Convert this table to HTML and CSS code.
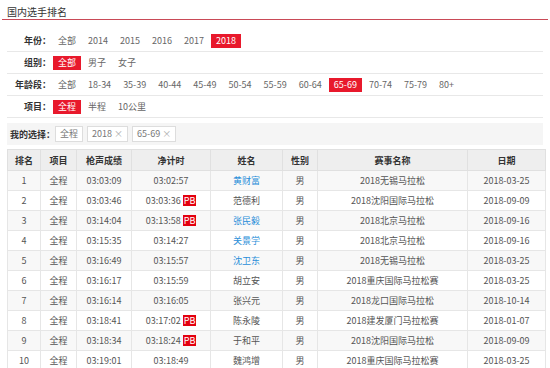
FILE: index.html
```html
<!DOCTYPE html>
<html lang="zh-CN">
<head>
  <meta charset="UTF-8" />
  <meta name="viewport" content="width=device-width, initial-scale=1.0"/>
  <title>国内选手排名</title>
  <link rel="stylesheet" href="styles.css">
</head>
<body>
  <h2 class="title">国内选手排名</h2>

  <div class="filters">
    <div class="filter-row">
      <span class="filter-label">年份：</span>
      <span class="opt">全部</span><span class="opt">2014</span><span class="opt">2015</span><span class="opt">2016</span><span class="opt">2017</span><span class="opt on">2018</span>
    </div>
    <div class="filter-row">
      <span class="filter-label">组别：</span>
      <span class="opt on">全部</span><span class="opt">男子</span><span class="opt">女子</span>
    </div>
    <div class="filter-row">
      <span class="filter-label">年龄段：</span>
      <span class="opt">全部</span><span class="opt">18-34</span><span class="opt">35-39</span><span class="opt">40-44</span><span class="opt">45-49</span><span class="opt">50-54</span><span class="opt">55-59</span><span class="opt">60-64</span><span class="opt on">65-69</span><span class="opt">70-74</span><span class="opt">75-79</span><span class="opt">80+</span>
    </div>
    <div class="filter-row">
      <span class="filter-label">项目：</span>
      <span class="opt on">全程</span><span class="opt">半程</span><span class="opt">10公里</span>
    </div>
  </div>

  <div class="picked">
    <span class="picked-label">我的选择：</span>
    <span class="chip">全程</span>
    <span class="chip">2018 <i>×</i></span>
    <span class="chip">65-69 <i>×</i></span>
  </div>

  <table class="rank">
    <colgroup>
      <col style="width:33px"><col style="width:36px"><col style="width:55px"><col style="width:79px">
      <col style="width:72px"><col style="width:35px"><col style="width:150px"><col style="width:78px">
    </colgroup>
    <thead>
      <tr><th>排名</th><th>项目</th><th>枪声成绩</th><th>净计时</th><th>姓名</th><th>性别</th><th>赛事名称</th><th>日期</th></tr>
    </thead>
    <tbody>
      <tr><td>1</td><td>全程</td><td>03:03:09</td><td>03:02:57</td><td><a class="name">黄财富</a></td><td>男</td><td>2018无锡马拉松</td><td>2018-03-25</td></tr>
      <tr><td>2</td><td>全程</td><td>03:03:46</td><td>03:03:36 <b class="pb">PB</b></td><td>范德利</td><td>男</td><td>2018沈阳国际马拉松</td><td>2018-09-09</td></tr>
      <tr><td>3</td><td>全程</td><td>03:14:04</td><td>03:13:58 <b class="pb">PB</b></td><td><a class="name">张民毅</a></td><td>男</td><td>2018北京马拉松</td><td>2018-09-16</td></tr>
      <tr><td>4</td><td>全程</td><td>03:15:35</td><td>03:14:27</td><td><a class="name">关景学</a></td><td>男</td><td>2018北京马拉松</td><td>2018-09-16</td></tr>
      <tr><td>5</td><td>全程</td><td>03:16:49</td><td>03:15:57</td><td><a class="name">沈卫东</a></td><td>男</td><td>2018无锡马拉松</td><td>2018-03-25</td></tr>
      <tr><td>6</td><td>全程</td><td>03:16:17</td><td>03:15:59</td><td>胡立安</td><td>男</td><td>2018重庆国际马拉松赛</td><td>2018-03-25</td></tr>
      <tr><td>7</td><td>全程</td><td>03:16:14</td><td>03:16:05</td><td>张兴元</td><td>男</td><td>2018龙口国际马拉松</td><td>2018-10-14</td></tr>
      <tr><td>8</td><td>全程</td><td>03:18:41</td><td>03:17:02 <b class="pb">PB</b></td><td>陈永陵</td><td>男</td><td>2018建发厦门马拉松赛</td><td>2018-01-07</td></tr>
      <tr><td>9</td><td>全程</td><td>03:18:34</td><td>03:18:24 <b class="pb">PB</b></td><td>于和平</td><td>男</td><td>2018沈阳国际马拉松</td><td>2018-09-09</td></tr>
      <tr><td>10</td><td>全程</td><td>03:19:01</td><td>03:18:49</td><td>魏鸿增</td><td>男</td><td>2018重庆国际马拉松赛</td><td>2018-03-25</td></tr>
    </tbody>
  </table>
</body>
</html>
```

FILE: styles.css
```css
* {
  margin: 0;
  padding: 0;
  box-sizing: border-box;
}

body {
  width: 550px;
  overflow: hidden;
  font-family: "Noto Sans CJK SC", "Noto Sans", sans-serif;
  font-size: 9px;
  color: #666;
  background: #fff;
}

.title {
  margin: 0 2px;
  padding: 4px 5px 0;
  height: 20px;
  font-size: 10px;
  line-height: 15px;
  font-weight: normal;
  color: #333;
  border-bottom: 1px solid #c94a57;
}

.filters {
  margin: 10px 7px 0 7px;
}

.filter-row {
  display: flex;
  align-items: center;
  height: 22px;
  border-bottom: 1px solid #e8e8e8;
}

.filter-label {
  width: 44px;
  margin-right: 2px;
  text-align: right;
  font-weight: bold;
  color: #333;
}

.opt {
  padding: 0 5px;
  margin-right: 2px;
  line-height: 14px;
  color: #666;
}

.opt.on {
  background: #e8192c;
  color: #fff;
}

.picked {
  display: flex;
  align-items: center;
  gap: 4px;
  margin: 5px 7px 0 7px;
  height: 22px;
  padding-left: 3px;
  background: #f5f5f5;
}

.picked-label {
  font-weight: bold;
  color: #333;
  margin-right: -4px;
}

.chip {
  padding: 0 4px;
  line-height: 14px;
  border: 1px solid #ddd;
  background: #fff;
  color: #777;
}

.chip i {
  font-style: normal;
  color: #aaa;
}

.rank {
  margin: 4px 5px 0 7px;
  width: 538px;
  table-layout: fixed;
  border-collapse: collapse;
  text-align: center;
}

.rank th {
  height: 21px;
  background: #eee;
  color: #333;
  font-weight: bold;
  border: 1px solid #e0e0e0;
}

.rank td {
  height: 20px;
  color: #555;
  border: 1px solid #e6e6e6;
}

.rank tbody tr:nth-child(odd) td {
  background: #f8f8f8;
}

.name {
  color: #2a8ed8;
}

.pb {
  display: inline-block;
  padding: 0 1px;
  line-height: 11px;
  font-size: 9px;
  font-weight: normal;
  background: #e3000f;
  color: #fff;
}
```
